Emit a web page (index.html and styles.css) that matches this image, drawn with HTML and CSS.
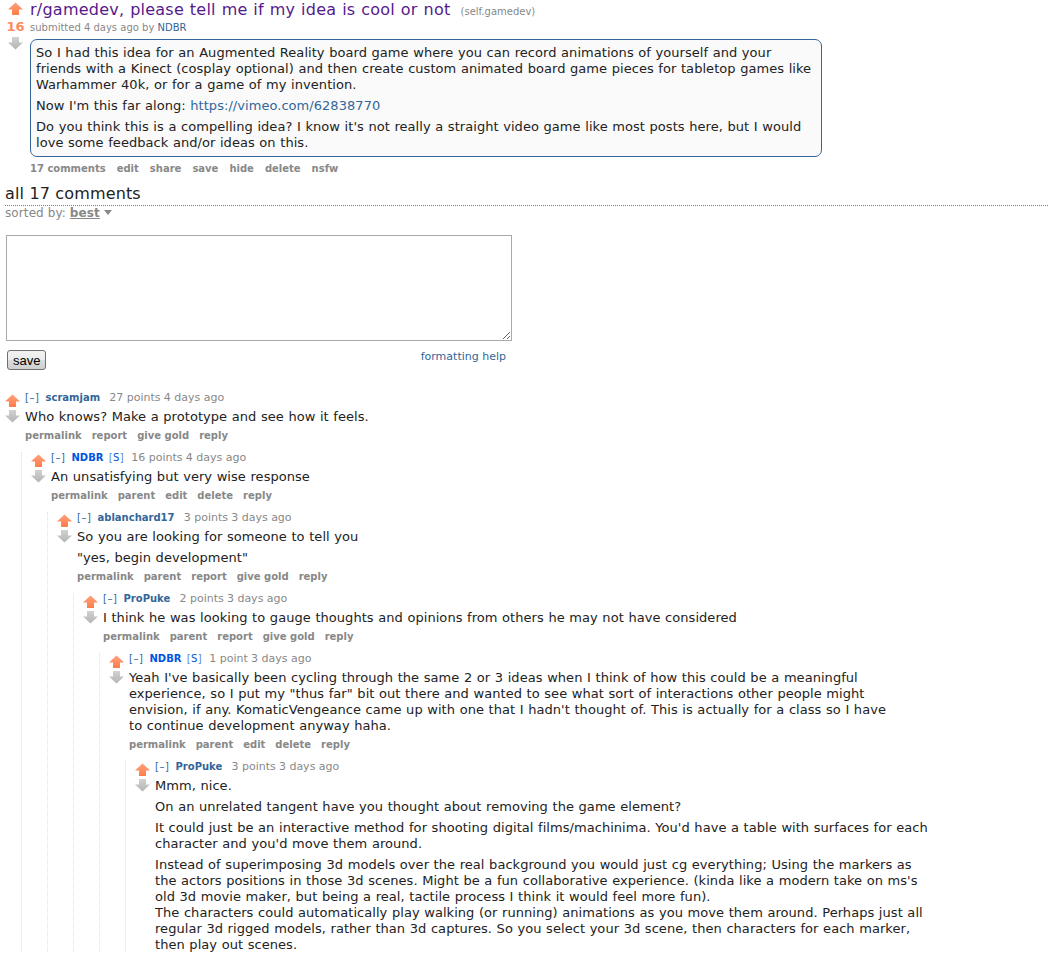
FILE: index.html
```html
<!DOCTYPE html>
<html lang="en">
<head>
  <meta charset="UTF-8">
  <title>r/gamedev, please tell me if my idea is cool or not</title>
  <link rel="stylesheet" href="styles.css">
</head>
<body>
  <svg class="defs" width="0" height="0" aria-hidden="true">
    <defs>
      <linearGradient id="g-up" x1="0" y1="0" x2="0" y2="1">
        <stop offset="0" stop-color="#ffa07c"/>
        <stop offset="1" stop-color="#ff7d4a"/>
      </linearGradient>
      <linearGradient id="g-down" x1="0" y1="0" x2="0" y2="1">
        <stop offset="0" stop-color="#d2d2d2"/>
        <stop offset="1" stop-color="#b4b4b4"/>
      </linearGradient>
      <symbol id="up" viewBox="0 0 15 14">
        <path d="M7.5 0.5 L15 7.5 L11 7.5 L11 13 L4 13 L4 7.5 L0 7.5 Z" fill="url(#g-up)"/>
      </symbol>
      <symbol id="down" viewBox="0 0 15 14">
        <path d="M4 1 L11 1 L11 6.5 L15 6.5 L7.5 13.5 L0 6.5 L4 6.5 Z" fill="url(#g-down)"/>
      </symbol>
    </defs>
  </svg>

  <!-- the submission -->
  <div class="link">
    <div class="midcol">
      <svg class="arrow up"><use href="#up"/></svg>
      <div class="score">16</div>
      <svg class="arrow down"><use href="#down"/></svg>
    </div>
    <div class="entry">
      <p class="title"><a href="#">r/gamedev, please tell me if my idea is cool or not</a> <span class="domain">(self.gamedev)</span></p>
      <p class="tagline">submitted 4 days ago by <a class="author" href="#">NDBR</a></p>
      <div class="usertext-body">
        <div class="md">
          <p>So I had this idea for an Augmented Reality board game where you can record animations of yourself and your<br>friends with a Kinect (cosplay optional) and then create custom animated board game pieces for tabletop games like<br>Warhammer 40k, or for a game of my invention.</p>
          <p>Now I'm this far along: <a href="#">https://vimeo.com/62838770</a></p>
          <p>Do you think this is a compelling idea? I know it's not really a straight video game like most posts here, but I would<br>love some feedback and/or ideas on this.</p>
        </div>
      </div>
      <ul class="buttons">
        <li><a href="#">17 comments</a></li>
        <li><a href="#">edit</a></li>
        <li><a href="#">share</a></li>
        <li><a href="#">save</a></li>
        <li><a href="#">hide</a></li>
        <li><a href="#">delete</a></li>
        <li><a href="#">nsfw</a></li>
      </ul>
    </div>
  </div>

  <div class="commentarea">
    <div class="panestack-title">all 17 comments</div>
    <div class="menuarea">sorted by: <a class="selected" href="#">best</a><span class="dropdown-arrow"></span></div>

    <form class="usertext-edit">
      <textarea name="text"></textarea>
      <div class="bottom-area">
        <button type="button" class="save-button">save</button>
        <a class="help-toggle" href="#">formatting help</a>
      </div>
    </form>

    <div class="sitetable">
      <div class="comment">
        <div class="row">
          <div class="midcol">
            <svg class="arrow up"><use href="#up"/></svg>
            <svg class="arrow down"><use href="#down"/></svg>
          </div>
          <div class="entry">
            <p class="tagline"><a class="expand" href="#">[&ndash;]</a> <a class="author" href="#">scramjam</a> <span class="score">27 points</span> <time>4 days ago</time></p>
            <div class="md"><p>Who knows? Make a prototype and see how it feels.</p></div>
            <ul class="buttons">
              <li><a href="#">permalink</a></li>
              <li><a href="#">report</a></li>
              <li><a href="#">give gold</a></li>
              <li><a href="#">reply</a></li>
            </ul>
          </div>
        </div>
        <div class="child">

          <div class="comment">
            <div class="row">
              <div class="midcol">
                <svg class="arrow up"><use href="#up"/></svg>
                <svg class="arrow down"><use href="#down"/></svg>
              </div>
              <div class="entry">
                <p class="tagline"><a class="expand" href="#">[&ndash;]</a> <a class="author submitter" href="#">NDBR</a> <span class="userattrs">[<a href="#">S</a>]</span> <span class="score">16 points</span> <time>4 days ago</time></p>
                <div class="md"><p>An unsatisfying but very wise response</p></div>
                <ul class="buttons">
                  <li><a href="#">permalink</a></li>
                  <li><a href="#">parent</a></li>
                  <li><a href="#">edit</a></li>
                  <li><a href="#">delete</a></li>
                  <li><a href="#">reply</a></li>
                </ul>
              </div>
            </div>
            <div class="child">

              <div class="comment">
                <div class="row">
                  <div class="midcol">
                    <svg class="arrow up"><use href="#up"/></svg>
                    <svg class="arrow down"><use href="#down"/></svg>
                  </div>
                  <div class="entry">
                    <p class="tagline"><a class="expand" href="#">[&ndash;]</a> <a class="author" href="#">ablanchard17</a> <span class="score">3 points</span> <time>3 days ago</time></p>
                    <div class="md">
                      <p>So you are looking for someone to tell you</p>
                      <p>"yes, begin development"</p>
                    </div>
                    <ul class="buttons">
                      <li><a href="#">permalink</a></li>
                      <li><a href="#">parent</a></li>
                      <li><a href="#">report</a></li>
                      <li><a href="#">give gold</a></li>
                      <li><a href="#">reply</a></li>
                    </ul>
                  </div>
                </div>
                <div class="child">

                  <div class="comment">
                    <div class="row">
                      <div class="midcol">
                        <svg class="arrow up"><use href="#up"/></svg>
                        <svg class="arrow down"><use href="#down"/></svg>
                      </div>
                      <div class="entry">
                        <p class="tagline"><a class="expand" href="#">[&ndash;]</a> <a class="author" href="#">ProPuke</a> <span class="score">2 points</span> <time>3 days ago</time></p>
                        <div class="md"><p>I think he was looking to gauge thoughts and opinions from others he may not have considered</p></div>
                        <ul class="buttons">
                          <li><a href="#">permalink</a></li>
                          <li><a href="#">parent</a></li>
                          <li><a href="#">report</a></li>
                          <li><a href="#">give gold</a></li>
                          <li><a href="#">reply</a></li>
                        </ul>
                      </div>
                    </div>
                    <div class="child">

                      <div class="comment">
                        <div class="row">
                          <div class="midcol">
                            <svg class="arrow up"><use href="#up"/></svg>
                            <svg class="arrow down"><use href="#down"/></svg>
                          </div>
                          <div class="entry">
                            <p class="tagline"><a class="expand" href="#">[&ndash;]</a> <a class="author submitter" href="#">NDBR</a> <span class="userattrs">[<a href="#">S</a>]</span> <span class="score">1 point</span> <time>3 days ago</time></p>
                            <div class="md"><p>Yeah I've basically been cycling through the same 2 or 3 ideas when I think of how this could be a meaningful<br>experience, so I put my "thus far" bit out there and wanted to see what sort of interactions other people might<br>envision, if any. KomaticVengeance came up with one that I hadn't thought of. This is actually for a class so I have<br>to continue development anyway haha.</p></div>
                            <ul class="buttons">
                              <li><a href="#">permalink</a></li>
                              <li><a href="#">parent</a></li>
                              <li><a href="#">edit</a></li>
                              <li><a href="#">delete</a></li>
                              <li><a href="#">reply</a></li>
                            </ul>
                          </div>
                        </div>
                        <div class="child">

                          <div class="comment">
                            <div class="row">
                              <div class="midcol">
                                <svg class="arrow up"><use href="#up"/></svg>
                                <svg class="arrow down"><use href="#down"/></svg>
                              </div>
                              <div class="entry">
                                <p class="tagline"><a class="expand" href="#">[&ndash;]</a> <a class="author" href="#">ProPuke</a> <span class="score">3 points</span> <time>3 days ago</time></p>
                                <div class="md">
                                  <p>Mmm, nice.</p>
                                  <p>On an unrelated tangent have you thought about removing the game element?</p>
                                  <p>It could just be an interactive method for shooting digital films/machinima. You'd have a table with surfaces for each<br>character and you'd move them around.</p>
                                  <p>Instead of superimposing 3d models over the real background you would just cg everything; Using the markers as<br>the actors positions in those 3d scenes. Might be a fun collaborative experience. (kinda like a modern take on ms's<br>old 3d movie maker, but being a real, tactile process I think it would feel more fun).<br>The characters could automatically play walking (or running) animations as you move them around. Perhaps just all<br>regular 3d rigged models, rather than 3d captures. So you select your 3d scene, then characters for each marker,<br>then play out scenes.</p>
                                </div>
                                <ul class="buttons">
                                  <li><a href="#">permalink</a></li>
                                  <li><a href="#">parent</a></li>
                                  <li><a href="#">report</a></li>
                                  <li><a href="#">give gold</a></li>
                                  <li><a href="#">reply</a></li>
                                </ul>
                              </div>
                            </div>
                          </div>

                        </div>
                      </div>

                    </div>
                  </div>

                </div>
              </div>

            </div>
          </div>

        </div>
      </div>
    </div>
  </div>
</body>
</html>
```

FILE: styles.css
```css
body {
  margin: 0;
  padding: 0 3px 20px 5px;
  font-family: "DejaVu Sans", Verdana, sans-serif;
  font-size: 10px;
  color: #222;
  background: #fff;
}
a {
  text-decoration: none;
}
p {
  margin: 0;
}
.defs {
  display: block;
  width: 0;
  height: 0;
  overflow: hidden;
}
.arrow {
  display: block;
  width: 15px;
  height: 14px;
}

/* submission */
.link {
  display: flex;
  margin-left: 2px;
}
.link .midcol {
  width: 17px;
  margin-right: 6px;
  flex-shrink: 0;
  display: flex;
  flex-direction: column;
  align-items: center;
}
.link .arrow.up {
  margin-top: 2px;
}
.link .score {
  margin-top: 3px;
  font-size: 13px;
  line-height: 15px;
  font-weight: bold;
  color: #ff8b60;
}
.link .arrow.down {
  margin-top: 2px;
}
.link .entry {
  flex: 1;
  min-width: 0;
}
.title {
  font-size: 16px;
  line-height: 19px;
}
.title a {
  color: #551a8b;
  letter-spacing: 0.24px;
  word-spacing: 0.5px;
}
.domain {
  margin-left: 5px;
  font-size: 10px;
  color: #888;
}
.tagline {
  font-size: 10px;
  line-height: 12px;
  color: #888;
}
.link .tagline {
  margin-top: 1px;
}
.author {
  color: #369;
}
.usertext-body {
  width: fit-content;
  margin-top: 5px;
  padding: 5px;
  border: 1px solid #369;
  border-radius: 7px;
  background: #fafafa;
}
.md {
  max-width: 800px;
  font-size: 13px;
  line-height: 16px;
  letter-spacing: 0.05px;
  word-spacing: 0.4px;
  color: #222;
}
.usertext-body .md {
  width: 780px;
}
.md p {
  margin: 5px 0;
}
.md a {
  color: #369;
}
.usertext-body .md p:first-child {
  margin-top: 0;
}
.usertext-body .md p:last-child {
  margin-bottom: 0;
}
.buttons {
  list-style: none;
  margin: 0;
  padding: 0;
  display: flex;
  gap: 10px;
  font-size: 10px;
  line-height: 12px;
  font-weight: bold;
}
.buttons a {
  color: #888;
}
.link .buttons {
  margin-top: 6px;
  gap: 11px;
}

/* comment area */
.panestack-title {
  margin-top: 9px;
  padding-bottom: 2px;
  border-bottom: 1px dotted #808080;
  font-size: 16px;
  line-height: 19px;
  letter-spacing: 0.15px;
  color: #222;
}
.menuarea {
  margin-top: 0;
  font-size: 12px;
  line-height: 14px;
  letter-spacing: 0.1px;
  color: #888;
}
.menuarea .selected {
  font-weight: bold;
  text-decoration: underline;
  color: #888;
}
.dropdown-arrow {
  display: inline-block;
  margin-left: 4px;
  vertical-align: 2px;
  border-left: 4px solid transparent;
  border-right: 4px solid transparent;
  border-top: 5px solid #888;
}
.usertext-edit textarea {
  display: block;
  box-sizing: border-box;
  width: 506px;
  height: 106px;
  margin: 15px 0 0 1px;
  padding: 2px;
  border: 1px solid #a9a9a9;
}
.bottom-area {
  display: flex;
  justify-content: space-between;
  align-items: flex-start;
  width: 499px;
  margin: 9px 0 0 2px;
}
.save-button {
  height: 20px;
  padding: 0 5px;
  font-family: "Liberation Sans", Arial, sans-serif;
  font-size: 13px;
  color: #000;
  border: 1px solid #707070;
  border-radius: 3px;
  background: linear-gradient(#f2f2f2, #ebebeb 50%, #dddddd 50%, #cfcfcf);
}
.help-toggle {
  font-size: 11px;
  line-height: 13px;
  color: #369;
}
.sitetable {
  margin-top: 22px;
}

/* comments */
.comment .row {
  display: flex;
}
.comment .midcol {
  width: 15px;
  margin-right: 5px;
  padding-top: 2px;
  flex-shrink: 0;
}
.comment .arrow.down {
  margin-top: 1px;
}
.comment .entry {
  flex: 1;
  min-width: 0;
}
.comment .expand {
  margin-right: 3px;
  letter-spacing: 0.5px;
  color: #369;
}
.comment .author {
  font-weight: bold;
}
.comment .author.submitter {
  color: #0055df;
}
.userattrs {
  margin-left: 2px;
  letter-spacing: 0.4px;
  color: #5f87d6;
}
.userattrs a {
  color: #0055df;
}
.comment .score {
  margin-left: 6px;
  font-size: 11px;
  line-height: 11px;
}
.userattrs + .score {
  margin-left: 4px;
}
.comment time {
  font-size: 11px;
  line-height: 11px;
}
.child {
  margin: 10px 0 0 16px;
  padding-left: 9px;
  border-left: 1px dotted #ddf;
}
```
